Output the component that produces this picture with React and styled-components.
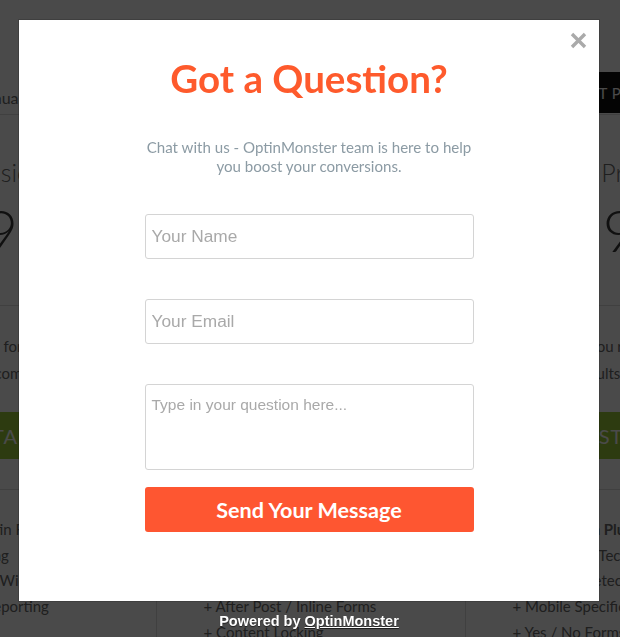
import React from "react";
import styled, { createGlobalStyle } from "styled-components";

const Global = createGlobalStyle`
  html, body { margin: 0; padding: 0; }
  body {
    width: 620px;
    height: 637px;
    overflow: hidden;
    background: #fff;
    font-family: "Lato", "Liberation Sans", sans-serif;
  }
  * { box-sizing: border-box; }
`;

/* ---------- background pricing page ---------- */
const Page = styled.div`
  width: 620px;
  height: 637px;
  overflow: hidden;
  background: #fff;
  color: #6a6a6a;
`;

const Header = styled.div`
  height: 115px;
  border-bottom: 1px solid #dcdcdc;
  display: flex;
  align-items: flex-end;
  justify-content: center;
`;

const HeaderInner = styled.div`
  flex: 0 0 930px;
  display: flex;
  align-items: flex-end;
  justify-content: space-between;
  padding: 0 40px 1px 128px;
`;

const BillingLabel = styled.span`
  font-size: 16px;
  line-height: 20px;
  margin-bottom: 5px;
  color: #6a6a6a;
`;

const DarkButton = styled.span`
  height: 41px;
  width: 175px;
  background: #111;
  color: #fff;
  font-size: 15px;
  display: flex;
  align-items: center;
  padding-left: 18px;
  letter-spacing: 0.5px;
`;

const Columns = styled.div`
  display: flex;
  justify-content: center;
`;

const Column = styled.div`
  flex: 0 0 309px;
  display: flex;
  flex-direction: column;
  border-left: ${(p) => (p.$first ? "none" : "1px solid #dcdcdc")};
`;

const ColHead = styled.div`
  height: 190px;
  padding-top: 42px;
  text-align: center;
`;

const PlanName = styled.div`
  font-size: 25px;
  line-height: 30px;
  font-weight: 300;
  color: #6a6a6a;
`;

const Price = styled.div`
  margin-top: 13px;
  font-size: 58px;
  line-height: 60px;
  font-weight: 300;
  color: #3a3a3a;
`;

const ColBody = styled.div`
  height: 184px;
  border-top: 1px solid #dcdcdc;
  padding: 27px 0 0;
  text-align: center;
`;

const Desc = styled.p`
  margin: 0 auto;
  font-size: 15px;
  line-height: 27px;
  color: #6a6a6a;
`;

const GreenButton = styled.div`
  margin: 25px 0 0;
  height: 47px;
  background: #9dcc3a;
  color: #fff;
  font-size: 20px;
  display: flex;
  align-items: center;
  justify-content: center;
  padding-left: 22px;
  letter-spacing: 1px;
`;

const Features = styled.ul`
  list-style: none;
  margin: 0;
  border-top: 1px solid #dcdcdc;
  padding: 27px 0 0 47px;
`;

const Feature = styled.li`
  font-size: 15px;
  line-height: 25.7px;
  white-space: nowrap;
  color: #6a6a6a;
  font-weight: ${(p) => (p.$bold ? 700 : 400)};
`;

/* ---------- popup ---------- */
const Overlay = styled.div`
  position: fixed;
  inset: 0;
  background: rgba(0, 0, 0, 0.71);
  display: flex;
  flex-direction: column;
  align-items: flex-start;
  padding: 20px 0 0 19px;
`;

const Popup = styled.div`
  position: relative;
  width: 580px;
  height: 581px;
  background: #fff;
  box-shadow: 0 0 0 1px rgba(0, 0, 0, 0.15);
  display: flex;
  flex-direction: column;
  align-items: center;
  padding-top: 33px;
`;

const CloseButton = styled.button`
  position: absolute;
  top: 12px;
  right: 12px;
  width: 17px;
  height: 17px;
  padding: 0;
  border: 0;
  background: none;
  display: flex;
  cursor: pointer;
`;

const Title = styled.h1`
  margin: 0;
  font-family: "Lato", sans-serif;
  font-weight: 700;
  font-size: 38.5px;
  line-height: 50px;
  color: #fe5a2c;
`;

const Subtitle = styled.p`
  margin: 35px 0 0;
  font-family: "Lato", sans-serif;
  font-size: 15.1px;
  line-height: 18.5px;
  color: #8c9ba4;
  text-align: center;
`;

const Form = styled.form`
  margin-top: 39px;
  width: 329px;
  display: flex;
  flex-direction: column;
`;

const Input = styled.input`
  display: block;
  width: 100%;
  height: 45px;
  margin: 0 0 ${(p) => p.$gap}px;
  padding: 0 6px;
  border: 1px solid #d4d4d4;
  border-radius: 3px;
  font-family: "Liberation Sans", Arial, sans-serif;
  font-size: 17.3px;
  color: #444;
  background: #fff;
  outline: none;
  &::placeholder { color: #a9a9a9; }
`;

const TextArea = styled.textarea`
  display: block;
  width: 100%;
  height: 86px;
  margin: 0 0 17px;
  padding: 10px 6px;
  border: 1px solid #d4d4d4;
  border-radius: 3px;
  font-family: "Liberation Sans", Arial, sans-serif;
  font-size: 15.5px;
  line-height: 20px;
  color: #444;
  resize: none;
  outline: none;
  &::placeholder { color: #a9a9a9; }
`;

const SubmitButton = styled.button`
  height: 45px;
  width: 100%;
  border: 0;
  border-radius: 3px;
  background: #fe5631;
  color: #fff;
  font-family: "Lato", sans-serif;
  font-weight: 700;
  font-size: 21.6px;
  padding: 0;
  cursor: pointer;
`;

const Powered = styled.div`
  width: 580px;
  margin-top: 11.5px;
  text-align: center;
  font-family: "Liberation Sans", Arial, sans-serif;
  font-weight: 700;
  font-size: 14.5px;
  line-height: 17px;
  color: #fff;
  text-shadow: 0 1px 1px rgba(0, 0, 0, 0.6);
  a { color: #fff; text-decoration: underline; }
`;

const plans = [
  {
    name: "Basic",
    price: "$99",
    desc: ["Perfect for you", "Blogging community"],
    features: [
      "+ Unlimited Optin Forms",
      "+ Smart Targeting",
      "+ Floating Bar / Widget",
      "+ Conversion Reporting",
    ],
  },
  {
    name: "Plus",
    price: "$99",
    desc: ["Everything you need to", "grow your list faster"],
    features: [
      "+ Everything in Basic",
      "+ Slide-in Forms",
      "+ Split Testing",
      "+ After Post / Inline Forms",
      "+ Content Locking",
    ],
  },
  {
    name: "Pro",
    price: "$99",
    desc: ["Helps you reach goals", "results faster"],
    features: [
      { t: "Everything in Plus", b: true },
      "+ Exit-Intent Technology",
      "+ Referrer Detection",
      "+ Mobile Specific Forms",
      "+ Yes / No Forms",
    ],
  },
];

function CloseIcon() {
  return (
    <svg width="17" height="17" viewBox="0 0 17 17" aria-hidden="true">
      <path d="M2 2 L15 15 M15 2 L2 15" stroke="#aaaaaa" strokeWidth="3.4" strokeLinecap="butt" />
    </svg>
  );
}

export default function App() {
  return (
    <>
      <Global />
      <Page>
        <Header>
          <HeaderInner>
            <BillingLabel>Annual</BillingLabel>
            <DarkButton>GET POPUPS</DarkButton>
          </HeaderInner>
        </Header>
        <Columns>
          {plans.map((p, i) => (
            <Column key={p.name} $first={i === 0}>
              <ColHead>
                <PlanName>{p.name}</PlanName>
                <Price>{p.price}</Price>
              </ColHead>
              <ColBody>
                <Desc>
                  {p.desc[0]}
                  <br />
                  {p.desc[1]}
                </Desc>
                <GreenButton>START</GreenButton>
              </ColBody>
              <Features>
                {p.features.map((f) =>
                  typeof f === "string" ? (
                    <Feature key={f}>{f}</Feature>
                  ) : (
                    <Feature key={f.t} $bold>
                      {f.t}
                    </Feature>
                  )
                )}
              </Features>
            </Column>
          ))}
        </Columns>
      </Page>

      <Overlay>
        <Popup>
          <CloseButton type="button" aria-label="Close">
            <CloseIcon />
          </CloseButton>
          <Title>Got a Question?</Title>
          <Subtitle>
            Chat with us - OptinMonster team is here to help
            <br />
            you boost your conversions.
          </Subtitle>
          <Form onSubmit={(e) => e.preventDefault()}>
            <Input type="text" placeholder="Your Name" $gap={40} />
            <Input type="email" placeholder="Your Email" $gap={40} />
            <TextArea placeholder="Type in your question here..." />
            <SubmitButton type="submit">Send Your Message</SubmitButton>
          </Form>
        </Popup>
        <Powered>
          Powered by <a href="#">OptinMonster</a>
        </Powered>
      </Overlay>
    </>
  );
}
